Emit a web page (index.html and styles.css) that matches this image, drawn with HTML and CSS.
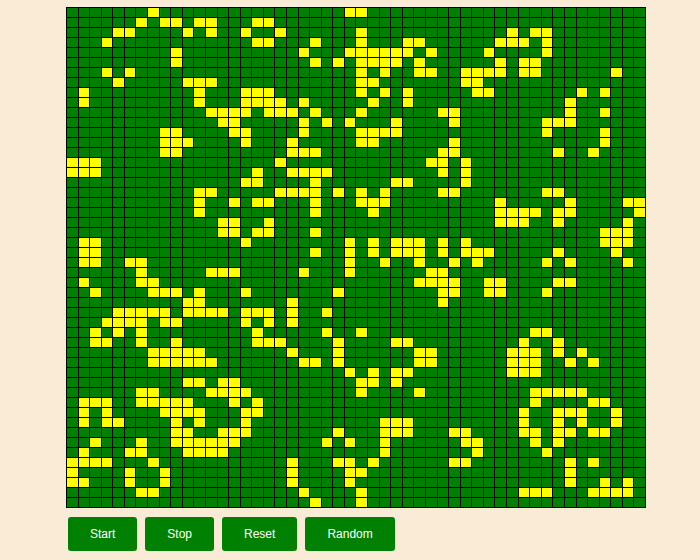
FILE: index.html
```html
<!DOCTYPE html>
<html lang="en">
<head>
<meta charset="utf-8">
<title>Game of Life</title>
<link rel="stylesheet" href="styles.css">
</head>
<body>
<main class="app">
  <div class="board" id="board"></div>
  <div class="controls">
    <button class="btn" type="button">Start</button>
    <button class="btn" type="button">Stop</button>
    <button class="btn" type="button">Reset</button>
    <button class="btn" type="button">Random</button>
  </div>
</main>
<script src="app.js"></script>
</body>
</html>
```
FILE: styles.css
```css
html, body {
  margin: 0;
  height: 100%;
  background: #faebd7;
}
body {
  font-family: "Liberation Sans", Arial, sans-serif;
  overflow: hidden;
}
.app {
  padding: 7px 0 0 66px;
}
.board {
  display: grid;
  grid-template-columns: repeat(50, 1fr);
  grid-auto-rows: 9px;
  gap: 1px;
  padding: 1px;
  width: 578px;
  background: #000;
}
.cell {
  background: #008000;
}
.cell.alive {
  background: #ffff00;
}
.controls {
  display: flex;
  gap: 8px;
  margin: 9px 0 0 2px;
}
.btn {
  height: 34px;
  padding: 0 22px;
  border: 0;
  border-radius: 3px;
  background: #008000;
  color: #fff;
  font: 12px "Liberation Sans", Arial, sans-serif;
}
```
FILE: app.js
```js
var ALIVE = [
  [7,24,25],
  [6,8,9,11,12,16,17],
  [4,5,10,12,15,18,25,38,40,41],
  [3,16,17,21,25,29,30,37,38,39,41],
  [9,20,24,25,26,27,28,29,31,36,41],
  [9,21,23,25,26,27,28,30,37,39,40],
  [3,5,25,27,30,31,34,35,36,37,39,40,47],
  [4,10,11,12,25,26,34,35],
  [1,11,15,16,17,25,27,29,35,36,44,46],
  [1,11,15,16,17,18,20,26,29,43],
  [12,13,14,15,17,18,19,21,25,32,33,43,46],
  [13,14,20,22,24,28,33,41,42,43],
  [8,9,14,15,20,25,26,27,28,41,46],
  [8,9,10,15,19,25,26,33,46],
  [8,9,19,20,21,32,33,42,45],
  [0,1,2,18,31,32,34],
  [0,1,2,16,19,20,21,22,32,34],
  [15,16,21,28,29,34],
  [11,12,18,19,20,21,23,25,27,32,33,41,42],
  [11,14,16,17,21,25,26,27,37,43,48,49],
  [11,21,26,37,38,39,40,42,43,49],
  [13,14,17,37,38,39,42,48],
  [13,14,16,17,21,46,47,48],
  [1,2,15,24,26,28,29,30,32,34,46,47,48],
  [1,2,21,24,26,28,29,30,32,34,35,36,42,47],
  [1,2,5,6,24,27,30,33,35,41,43,48],
  [6,12,13,14,20,24,31,32],
  [1,6,7,30,31,32,33,36,37,42,43],
  [2,7,8,9,11,15,23,32,33,36,37,41],
  [10,11,19,32],
  [4,5,6,7,8,10,11,12,13,15,16,17,19,22],
  [3,4,5,6,8,9,15,17,19],
  [2,4,6,16,22,25,40,41],
  [2,3,6,9,16,17,18,23,28,29,39,42],
  [7,8,9,10,11,19,23,30,31,38,39,40,42,44],
  [7,8,9,10,11,12,20,21,23,30,31,38,39,40,43,45],
  [24,26,28,29,38,39,40],
  [10,11,13,14,25,26,28],
  [6,7,12,13,14,15,25,30,40,41,42,43,44],
  [1,2,3,6,7,8,9,10,14,16,40,45,46],
  [1,3,8,9,10,11,15,16,39,42,43,44,47],
  [1,3,4,9,11,15,27,28,29,39,42,44,47],
  [9,10,13,14,15,23,27,28,29,33,34,39,40,42,43,45,46],
  [2,6,9,10,11,12,13,14,22,24,27,34,35,40,42],
  [1,5,6,10,11,12,13,27,35,41],
  [0,1,2,3,7,19,23,24,26,33,34,43,45],
  [0,5,8,19,24,25,43],
  [0,1,5,8,19,24,43,46,48],
  [6,7,20,25,39,40,41,45,46,47,48],
  [21,25]
];

var board = document.getElementById('board');
ALIVE.forEach(function (row) {
  for (var c = 0; c < 50; c++) {
    var cell = document.createElement('div');
    cell.className = row.indexOf(c) >= 0 ? 'cell alive' : 'cell';
    board.appendChild(cell);
  }
});
```
